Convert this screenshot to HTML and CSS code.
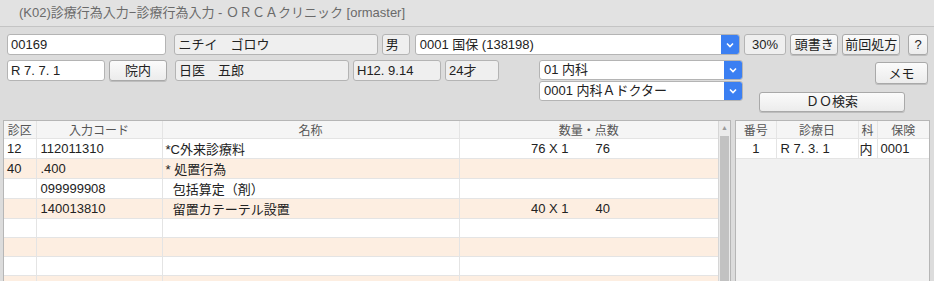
FILE: index.html
```html
<!DOCTYPE html>
<html lang="ja">
<head>
  <meta charset="UTF-8">
  <title>診療行為入力</title>
  <link rel="stylesheet" href="styles.css">
</head>
<body>
  <div class="titlebar">(K02)診療行為入力−診療行為入力 - ＯＲＣＡクリニック [ormaster]</div>

  <div class="form">
    <div class="row row-top">
      <div class="field edit w-id">00169</div>
      <div class="field ro w-kana">ニチイ　ゴロウ</div>
      <div class="field ro w-sex">男</div>
      <div class="combo w-ins">
        <span class="combo-text">0001 国保 (138198)</span>
        <span class="combo-btn"><svg width="8" height="6" viewBox="0 0 8 6"><path d="M1 1.5 L4 4.5 L7 1.5" fill="none" stroke="#fff" stroke-width="1.6"/></svg></span>
      </div>
      <div class="field ro w-rate">30%</div>
      <button class="btn w-head">頭書き</button>
      <button class="btn w-prev">前回処方</button>
      <button class="btn w-help">?</button>
    </div>

    <div class="row row-second">
      <div class="row">
        <div class="field edit w-date">R 7. 7. 1</div>
        <button class="btn w-inner">院内</button>
        <div class="field ro w-doc">日医　五郎</div>
        <div class="field ro w-birth">H12. 9.14</div>
        <div class="field ro w-age">24才</div>
      </div>
      <div class="combos">
        <div class="combo w-dept">
          <span class="combo-text">01 内科</span>
          <span class="combo-btn"><svg width="8" height="6" viewBox="0 0 8 6"><path d="M1 1.5 L4 4.5 L7 1.5" fill="none" stroke="#fff" stroke-width="1.6"/></svg></span>
        </div>
        <div class="combo w-dept">
          <span class="combo-text">0001 内科Ａドクター</span>
          <span class="combo-btn"><svg width="8" height="6" viewBox="0 0 8 6"><path d="M1 1.5 L4 4.5 L7 1.5" fill="none" stroke="#fff" stroke-width="1.6"/></svg></span>
        </div>
      </div>
      <div class="actions">
        <button class="btn w-memo">メモ</button>
        <button class="btn w-do">ＤＯ検索</button>
      </div>
    </div>
  </div>

  <div class="panels">
    <div class="panel main-panel">
      <table class="grid">
        <colgroup>
          <col style="width:32px">
          <col style="width:126px">
          <col style="width:297px">
          <col>
        </colgroup>
        <thead>
          <tr><th>診区</th><th>入力コード</th><th>名称</th><th>数量・点数</th></tr>
        </thead>
        <tbody>
          <tr><td>12</td><td>112011310</td><td>*C外来診療料</td><td class="qty"><span class="q">76 X 1</span><span class="p">76</span></td></tr>
          <tr class="alt"><td>40</td><td>.400</td><td>* 処置行為</td><td></td></tr>
          <tr><td></td><td>099999908</td><td class="sub">  包括算定（剤）</td><td></td></tr>
          <tr class="alt"><td></td><td>140013810</td><td class="sub">  留置カテーテル設置</td><td class="qty"><span class="q">40 X 1</span><span class="p">40</span></td></tr>
          <tr><td></td><td></td><td></td><td></td></tr>
          <tr class="alt"><td></td><td></td><td></td><td></td></tr>
          <tr><td></td><td></td><td></td><td></td></tr>
          <tr class="alt"><td></td><td></td><td></td><td></td></tr>
        </tbody>
      </table>
      <div class="scrollbar">
        <div class="arrow">▲</div>
        <div class="thumb"></div>
      </div>
    </div>

    <div class="panel history-panel">
      <table class="grid">
        <colgroup>
          <col style="width:40px">
          <col style="width:82px">
          <col style="width:19px">
          <col>
        </colgroup>
        <thead>
          <tr><th>番号</th><th>診療日</th><th>科</th><th>保険</th></tr>
        </thead>
        <tbody>
          <tr><td class="center">1</td><td>R 7. 3. 1</td><td class="tight">内</td><td>0001</td></tr>
        </tbody>
      </table>
    </div>
  </div>
</body>
</html>
```

FILE: styles.css
```css
:root {
  --bg: #dcdcdc;
  --field-border: #b4b4b4;
  --ro-bg: #efefef;
  --blue: #3b7ff2;
  --stripe: #fdeee1;
  --line: #e4e4e4;
  --text: #222;
}

html, body {
  margin: 0;
  height: 281px;
  overflow: hidden;
}

body {
  background: var(--bg);
  font-family: "Liberation Sans", "Noto Sans CJK JP", sans-serif;
  font-size: 13px;
  color: var(--text);
}

.titlebar {
  height: 26px;
  line-height: 26px;
  padding-left: 19px;
  background: #e2e2e2;
  border-bottom: 1px solid #c4c4c4;
  color: #6a6a6a;
  font-size: 13px;
}

.form {
  padding: 7px 6px 0 7px;
}

.row {
  display: flex;
  align-items: flex-start;
}

.row-top > * + * {
  margin-left: 4px;
}

.field,
.combo,
.btn {
  box-sizing: border-box;
  height: 21px;
  border: 1px solid var(--field-border);
  border-radius: 3px;
  font: inherit;
  color: var(--text);
  line-height: 19px;
  white-space: nowrap;
}

.field {
  padding: 0 3px;
}

.edit {
  background: #fff;
}

.ro {
  background: var(--ro-bg);
}

.btn {
  padding: 0;
  text-align: center;
  background: linear-gradient(#fbfbfb, #ececec);
  border-color: #a9a9a9;
  box-shadow: 0 1px 0 #bdbdbd;
  cursor: pointer;
}

.combo {
  display: flex;
  background: #fff;
  overflow: hidden;
}

.combo-text {
  flex: 1;
  padding: 0 4px;
}

.combo-btn {
  width: 18px;
  background: var(--blue);
  display: flex;
  align-items: center;
  justify-content: center;
}

.w-id { width: 160px; }
.w-kana { width: 204px; margin-left: 8px !important; }
.w-sex { width: 28px; }
.w-ins { width: 326px; margin-left: 5px !important; }
.w-rate { width: 43px; text-align: center; }
.w-head { width: 48px; }
.w-prev { width: 58px; }
.w-help { width: 20px; margin-left: 8px !important; }

.row-second {
  margin-top: 5px;
}

.row-second .row > * + * {
  margin-left: 4px;
}

.w-date { width: 98px; }
.w-inner { width: 58px; }
.w-doc { width: 174px; margin-left: 8px !important; }
.w-birth { width: 88px; }
.w-age { width: 54px; }

.combos {
  display: flex;
  flex-direction: column;
  margin-left: 40px;
}

.w-dept { width: 204px; height: 20px; line-height: 18px; }
.combos .combo + .combo { margin-top: 1px; }

.actions {
  display: flex;
  flex-direction: column;
  margin-left: 16px;
  width: 169px;
}

.w-memo {
  align-self: flex-end;
  width: 53px;
  height: 22px;
  margin-top: 2px;
}

.w-do {
  width: 146px;
  height: 20px;
  line-height: 18px;
  margin-top: 8px;
}

.panels {
  display: flex;
  margin-top: 8px;
  padding: 0 4px 0 3px;
  height: 170px;
}

.panel {
  box-sizing: border-box;
  border: 1px solid #b6b6b6;
  border-bottom: none;
  background: #f1f1f1;
  display: flex;
}

.main-panel {
  width: 728px;
}

.history-panel {
  width: 197px;
  margin-left: 4px;
}

.grid {
  border-collapse: collapse;
  table-layout: fixed;
  width: 100%;
  align-self: flex-start;
}

.main-panel .grid {
  width: 715px;
}

.grid th {
  height: 17px;
  padding: 0;
  background: #f5f5f5;
  color: #555;
  font-size: 12px;
  font-weight: normal;
  border-right: 1px solid var(--line);
  border-bottom: 1px solid var(--line);
}

.grid td {
  height: 18px;
  padding: 0 3px;
  background: #fff;
  border-right: 1px solid var(--line);
  border-bottom: 1px solid var(--line);
  white-space: pre;
  overflow: hidden;
}

.grid tr.alt td {
  background: var(--stripe);
}

.grid td:nth-child(2) {
  padding-left: 4px;
}

.grid th:last-child,
.grid td:last-child {
  border-right: none;
}

.qty {
  padding: 0 !important;
}

.qty .q {
  display: inline-block;
  width: 109px;
  text-align: right;
}

.qty .p {
  margin-left: 27px;
}

.center {
  text-align: center;
}

.tight {
  padding: 0 1px !important;
}

.scrollbar {
  width: 11px;
  border-left: 1px solid #d6d6d6;
  background: #ebebeb;
  display: flex;
  flex-direction: column;
}

.arrow {
  height: 14px;
  font-size: 7px;
  line-height: 14px;
  text-align: center;
  color: #9a9a9a;
}

.thumb {
  flex: 1;
  margin: 1px 1px 0;
  background: #c2c2c2;
}
```
